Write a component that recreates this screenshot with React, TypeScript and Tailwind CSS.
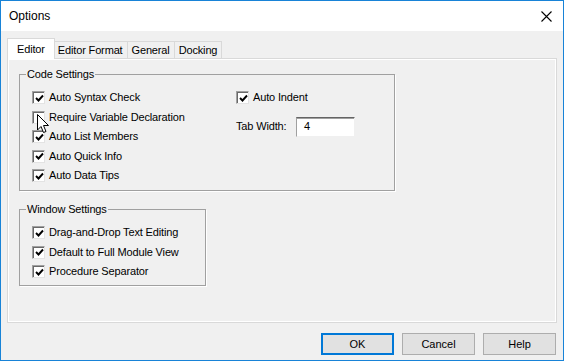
// Options dialog — VBA editor style, Windows 10 chrome.

const font = { fontFamily: '"Liberation Sans", Arial, sans-serif' };

function Check({ checked = true }: { checked?: boolean }) {
  return (
    <span className="relative flex h-[13px] w-[13px] shrink-0 items-center justify-center border border-t-[#a0a0a0] border-l-[#a0a0a0] border-b-[#e3e3e3] border-r-[#e3e3e3] bg-white shadow-[inset_1px_1px_0_#696969]">
      {checked && (
        <svg width="9" height="9" viewBox="0 0 9 9" className="ml-[1px] mt-[1px]">
          <path d="M1 4 L3.5 6.5 L8 1.5" fill="none" stroke="#000" strokeWidth="1.9" />
        </svg>
      )}
    </span>
  );
}

function Row({ label, checked = true }: { label: string; checked?: boolean }) {
  return (
    <div className="flex h-[19.5px] items-center gap-[4px]">
      <Check checked={checked} />
      <span className="text-[11px] leading-none tracking-[-0.15px] text-black">{label}</span>
    </div>
  );
}

function Group({ title, className, children }: { title: string; className: string; children: React.ReactNode }) {
  return (
    <fieldset className={`border border-[#a0a0a0] shadow-[1px_1px_0_#fff] ${className}`}>
      <legend className="-ml-[6px] px-[1px] text-[11px] leading-none tracking-[-0.15px] text-black">{title}</legend>
      {children}
    </fieldset>
  );
}

function Tab({ label, active = false }: { label: string; active?: boolean }) {
  return active ? (
    <div className="relative z-10 -mr-[1px] flex h-[21px] items-center border border-b-0 border-[#d9d9d9] bg-white px-[9px] text-[11px] tracking-[-0.15px]">
      {label}
    </div>
  ) : (
    <div className="-ml-[1px] mt-[3px] flex h-[17px] items-center border border-b-0 border-[#d9d9d9] bg-[#f0f0f0] px-[4px] text-[11px] tracking-[-0.15px]">
      {label}
    </div>
  );
}

function Btn({ label, def = false }: { label: string; def?: boolean }) {
  return (
    <div
      className={`flex h-[22px] w-[73px] items-center justify-center bg-[#e1e1e1] text-[11px] ${
        def ? "border-2 border-[#0078d7]" : "border border-[#adadad]"
      }`}
    >
      {label}
    </div>
  );
}

export default function App() {
  return (
    <div style={font} className="relative flex h-[361px] w-[564px] flex-col border border-[#1883d7] bg-[#f0f0f0] text-black">
      <header className="flex h-[30px] shrink-0 items-center justify-between bg-white pl-[8px] pr-[8px]">
        <span className="text-[12px]">Options</span>
        <svg width="11" height="11" viewBox="0 0 11 11" className="mr-[3px]">
          <path d="M0.5 0.5 L10.5 10.5 M10.5 0.5 L0.5 10.5" stroke="#000" strokeWidth="1.1" />
        </svg>
      </header>

      <div className="flex flex-1 flex-col px-[6px] pt-[7px]">
        <div className="flex items-start">
          <Tab label="Editor" active />
          <Tab label="Editor Format" />
          <Tab label="General" />
          <Tab label="Docking" />
        </div>
        <div className="-mt-[1px] h-[265px] border border-[#d9d9d9] shadow-[inset_1px_1px_0_#fff,inset_-1px_-1px_0_#fff] px-[11px] pt-[10px]">
          <Group title="Code Settings" className="h-[122px] w-[376px] pl-[12px] pt-[8px]">
            <div className="flex">
              <div className="w-[204px]">
                <Row label="Auto Syntax Check" />
                <Row label="Require Variable Declaration" checked={false} />
                <Row label="Auto List Members" />
                <Row label="Auto Quick Info" />
                <Row label="Auto Data Tips" />
              </div>
              <div>
                <Row label="Auto Indent" />
                <div className="mt-[9px] flex items-center">
                  <span className="w-[60px] text-[11px] tracking-[-0.15px]">Tab Width:</span>
                  <div className="flex h-[20px] w-[59px] items-center border border-t-[#646464] border-l-[#a0a0a0] border-b-[#f0f0f0] border-r-[#f0f0f0] bg-white pl-[7px] text-[11px] shadow-[inset_0_1px_0_#a0a0a0]">
                    4
                  </div>
                </div>
              </div>
            </div>
          </Group>
          <Group title="Window Settings" className="mt-[13px] h-[82px] w-[187px] pl-[12px] pt-[8px]">
            <Row label="Drag-and-Drop Text Editing" />
            <Row label="Default to Full Module View" />
            <Row label="Procedure Separator" />
          </Group>
        </div>

        <div className="mt-[10px] flex justify-end gap-[8px] pr-[1px]">
          <Btn label="OK" def />
          <Btn label="Cancel" />
          <Btn label="Help" />
        </div>
      </div>

      {/* mouse pointer over the unchecked box */}
      <svg width="13" height="20" viewBox="0 0 13 20" className="absolute left-[36px] top-[113px]">
        <path d="M0.5 0.5 L0.5 16 L4 12.5 L6.5 18.5 L9 17.5 L6.5 11.5 L11.5 11.5 Z" fill="#fff" stroke="#000" strokeWidth="1" strokeLinejoin="miter" />
      </svg>
    </div>
  );
}
